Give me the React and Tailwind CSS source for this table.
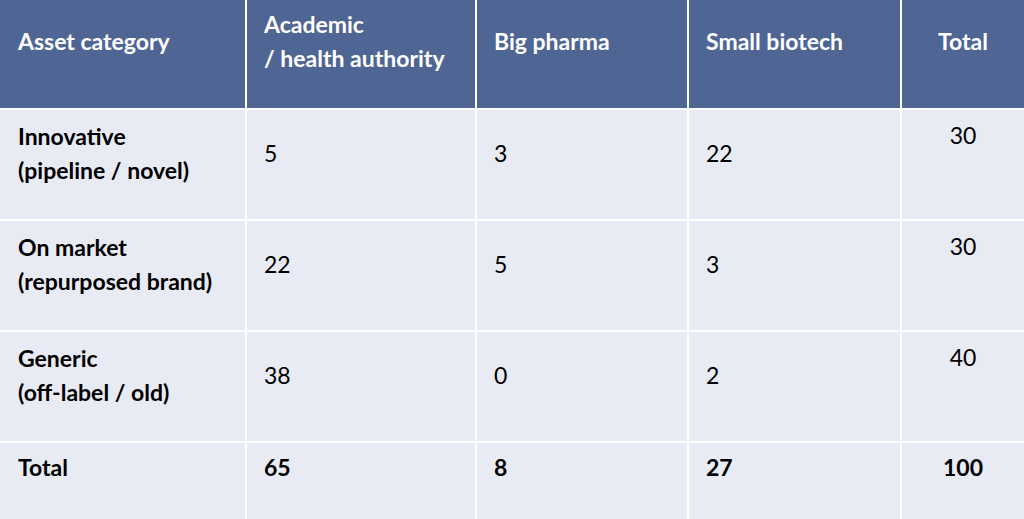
const header = ['Asset category', 'Academic\n/ health authority', 'Big pharma', 'Small biotech', 'Total'];

const rows = [
  { label: ['Innovative', '(pipeline / novel)'], values: ['5', '3', '22'], total: '30' },
  { label: ['On market', '(repurposed brand)'], values: ['22', '5', '3'], total: '30' },
  { label: ['Generic', '(off-label / old)'], values: ['38', '0', '2'], total: '40' },
];

const totals = ['65', '8', '27', '100'];

export default function App() {
  return (
    <div
      className="w-[1024px] h-[519px] overflow-hidden bg-white"
      style={{ fontFamily: 'Lato, "Open Sans", sans-serif' }}
    >
      <div className="grid grid-cols-[245px_228px_210px_211px_1fr] grid-rows-[108px_109px_109px_109px_1fr] gap-[2px] h-full bg-white text-[23px] leading-[34px]">
        {/* Header */}
        {header.map((h, i) => (
          <div
            key={h}
            className={`bg-[#4f6593] text-white font-bold pt-[7px] ${i === 4 ? 'text-center' : 'pl-[17px]'} ${i === 0 ? 'pl-[18px]' : ''}`}
          >
            <div className={`h-[68px] flex flex-col justify-center ${i === 4 ? 'items-center' : ''}`}>
              {h.split('\n').map((line) => (
                <span key={line}>{line}</span>
              ))}
            </div>
          </div>
        ))}

        {/* Body rows */}
        {rows.map((r) => (
          <div key={r.label[0]} className="contents">
            <div className="bg-[#e8ebf4] text-black font-bold pt-[8px] pl-[18px]">
              <div className="h-[69px] flex flex-col justify-center">
                <span>{r.label[0]}</span>
                <span>{r.label[1]}</span>
              </div>
            </div>
            {r.values.map((v, j) => (
              <div key={j} className="bg-[#e8ebf4] text-black pt-[8px] pl-[17px]">
                <div className="h-[69px] flex items-center">{v}</div>
              </div>
            ))}
            <div className="bg-[#e8ebf4] text-black pt-[8px] text-center">{r.total}</div>
          </div>
        ))}

        {/* Total row */}
        <div className="bg-[#e8ebf4] text-black font-bold pt-[7px] pl-[18px]">Total</div>
        {totals.map((t, j) => (
          <div
            key={j}
            className={`bg-[#e8ebf4] text-black font-bold pt-[7px] ${j === 3 ? 'text-center' : 'pl-[17px]'}`}
          >
            {t}
          </div>
        ))}
      </div>
    </div>
  );
}
